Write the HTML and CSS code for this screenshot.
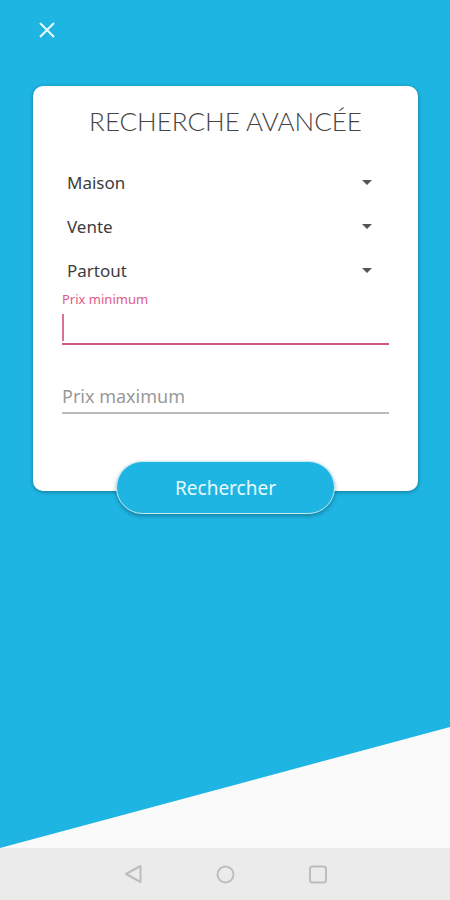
FILE: index.html
```html
<!DOCTYPE html>
<html lang="fr">
<head>
<meta charset="utf-8">
<meta name="viewport" content="width=device-width, initial-scale=1">
<title>Recherche avancée</title>
<link rel="stylesheet" href="styles.css">
</head>
<body>
<main class="screen">
  <header class="topbar">
    <button class="icon-button" type="button" aria-label="Fermer">
      <svg width="16" height="16" viewBox="0 0 16 16" fill="none" stroke="currentColor" stroke-width="2"><path d="M1 1l14 14M15 1L1 15"/></svg>
    </button>
  </header>
  <form class="card">
    <h1 class="title">RECHERCHE AVANCÉE</h1>
    <div class="picker">
      <select class="select" aria-label="Type de bien"><option>Maison</option></select>
      <svg class="arrow" width="10" height="5" viewBox="0 0 10 5"><path d="M0 0h10L5 5z" fill="currentColor"/></svg>
    </div>
    <div class="picker">
      <select class="select" aria-label="Transaction"><option>Vente</option></select>
      <svg class="arrow" width="10" height="5" viewBox="0 0 10 5"><path d="M0 0h10L5 5z" fill="currentColor"/></svg>
    </div>
    <div class="picker">
      <select class="select" aria-label="Lieu"><option>Partout</option></select>
      <svg class="arrow" width="10" height="5" viewBox="0 0 10 5"><path d="M0 0h10L5 5z" fill="currentColor"/></svg>
    </div>
    <label class="label" for="price-min">Prix minimum</label>
    <input class="input input-active" id="price-min" type="text" inputmode="numeric">
    <input class="input input-last" id="price-max" type="text" inputmode="numeric" placeholder="Prix maximum" aria-label="Prix maximum">
    <button class="submit" type="submit">Rechercher</button>
  </form>
  <svg class="slope" viewBox="0 0 450 121" preserveAspectRatio="none" aria-hidden="true"><path d="M0 121L450 0v121z" fill="currentColor"/></svg>
</main>
<nav class="navbar" aria-label="Système">
  <button class="nav-button" type="button" aria-label="Retour">
    <svg width="20" height="20" viewBox="0 0 20 20" fill="none" stroke="currentColor" stroke-width="2" stroke-linejoin="round"><path d="M17.500 2v16L3 10z"/></svg>
  </button>
  <button class="nav-button" type="button" aria-label="Accueil">
    <svg width="20" height="20" viewBox="0 0 20 20" fill="none" stroke="currentColor" stroke-width="2"><circle cx="10.500" cy="10.500" r="8"/></svg>
  </button>
  <button class="nav-button" type="button" aria-label="Applications récentes">
    <svg width="20" height="20" viewBox="0 0 20 20" fill="none" stroke="currentColor" stroke-width="2"><rect x="3" y="2.500" width="16" height="16" rx="2.500"/></svg>
  </button>
</nav>
</body>
</html>
```
FILE: styles.css
```css
* {
  box-sizing: border-box;
}

body {
  margin: 0;
  min-height: 100vh;
  display: flex;
  flex-direction: column;
  font-family: "Noto Sans", sans-serif;
  font-weight: 400;
}

button,
input,
select {
  font: inherit;
  margin: 0;
  border: 0;
  border-radius: 0;
  outline: 0;
}

svg {
  display: block;
}

.screen {
  flex: 1;
  display: flex;
  flex-direction: column;
  background: #1eb5e3;
}

.topbar {
  display: flex;
  align-items: center;
  height: 60px;
  padding: 0 32px;
}

.icon-button {
  padding: 7px;
  color: #e8fbff;
  background: none;
}

.card {
  display: flex;
  flex-direction: column;
  margin: 26px 32px 0 33px;
  padding: 16px 29px 0;
  border-radius: 10px;
  background: #fff;
  box-shadow: 0 1px 4px rgba(0, 0, 0, 0.35);
}

.title {
  margin: 0 0 20px;
  font-family: Lato, sans-serif;
  font-size: 26px;
  font-weight: 300;
  line-height: 38px;
  text-align: center;
  color: #444;
}

.picker {
  display: grid;
  align-items: center;
  height: 44px;
}

.select,
.arrow {
  grid-area: 1 / 1;
}

.select {
  appearance: none;
  width: 100%;
  height: 44px;
  padding: 0 5px;
  font-size: 17px;
  color: #3c3c3c;
  background: transparent;
}

.arrow {
  justify-self: end;
  margin-right: 17px;
  color: #555;
  pointer-events: none;
}

.label {
  margin-bottom: 3px;
  font-size: 13px;
  line-height: 14px;
  color: #dc5a8c;
}

.input {
  width: 100%;
  height: 36px;
  padding: 2px 0 0;
  border-bottom: 2px solid #bbb;
  font-size: 18px;
  color: #333;
  background: none;
}

.input::placeholder {
  color: #999;
  opacity: 1;
}

.input-active {
  border-bottom-color: #d25a82;
  caret-color: transparent;
  background: linear-gradient(#dc7096, #dc7096) 0 5px / 2px 27px no-repeat;
}

.input-last {
  margin-top: 33px;
}

.submit {
  align-self: center;
  width: 67%;
  height: 53px;
  margin: 47px 0 -23px;
  border: 1px solid #c5edf6;
  border-radius: 27px;
  font-size: 19px;
  color: #e8fbff;
  background: #1eb5e3;
  box-shadow: 0 2px 4px rgba(0, 0, 0, 0.3);
}

.slope {
  width: 100%;
  height: 121px;
  margin-top: auto;
  color: #fafafa;
}

.navbar {
  display: flex;
  justify-content: center;
  align-items: center;
  gap: 52px;
  height: 52px;
  background: #ebebeb;
}

.nav-button {
  padding: 10px;
  color: #bdbdbd;
  background: none;
}
```
